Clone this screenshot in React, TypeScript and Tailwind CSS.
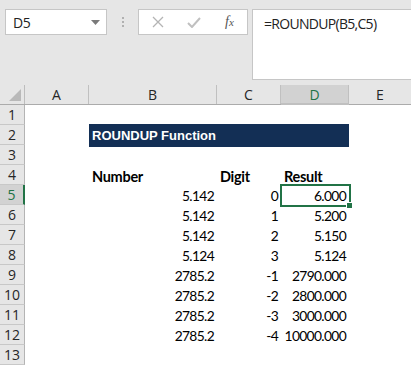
import React from 'react'

const cols = ['A', 'B', 'C', 'D', 'E']
const colW = ['w-[64px]', 'w-[128px]', 'w-[64px]', 'w-[68px]', 'w-[62px]']

const data: [string, string, string][] = [
  ['5.142', '0', '6.000'],
  ['5.142', '1', '5.200'],
  ['5.142', '2', '5.150'],
  ['5.124', '3', '5.124'],
  ['2785.2', '-1', '2790.000'],
  ['2785.2', '-2', '2800.000'],
  ['2785.2', '-3', '3000.000'],
  ['2785.2', '-4', '10000.000'],
]

const cellFont = "font-['Lato','Liberation_Sans',sans-serif] text-[14.5px] text-black"
const numCell = 'text-[13.8px] tracking-[-0.65px] pt-[3px]'
const uiFont = "font-['Open_Sans','Noto_Sans',sans-serif]"

function RowHead({ n, active = false }: { n: number; active?: boolean }) {
  return (
    <div
      className={`w-[25px] shrink-0 h-full flex items-center justify-center border-b border-[#c8c8c8] text-[14px] ${uiFont} ${
        active ? 'bg-[#d2d2d2] text-[#217346] border-r-2 border-r-[#217346]' : 'bg-[#e6e6e6] text-[#262626] border-r border-r-[#b4b4b4]'
      }`}
    >
      {n}
    </div>
  )
}

function Row({ n, children, active = false }: { n: number; children?: React.ReactNode; active?: boolean }) {
  return (
    <div className="flex h-[20px]">
      <RowHead n={n} active={active} />
      {children ?? <div className="flex-1" />}
    </div>
  )
}

export default function App() {
  return (
    <div className="w-[411px] h-[365px] overflow-hidden bg-white flex flex-col">
      {/* formula bar */}
      <div className="h-[85px] shrink-0 bg-[#e6e6e6] flex items-start pt-[9px] pl-[5px]">
        <div className={`w-[102px] h-[26px] bg-white border border-[#c6c6c6] flex items-center justify-between pl-[7px] pr-[6px] text-[14px] tracking-[-0.3px] text-[#222] ${uiFont}`}>
          <span>D5</span>
          <svg width="9" height="5" viewBox="0 0 9 5"><path d="M0 0h9L4.5 5z" fill="#7a7a7a" /></svg>
        </div>
        <div className="w-[31px] h-[26px] flex flex-col items-center justify-center gap-[2px]">
          <span className="w-[2px] h-[2px] bg-[#b0b0b0]" />
          <span className="w-[2px] h-[2px] bg-[#b0b0b0]" />
          <span className="w-[2px] h-[2px] bg-[#b0b0b0]" />
        </div>
        <div className="w-[110px] h-[26px] bg-white border border-[#c6c6c6] flex items-center">
          <svg className="ml-[13px]" width="12" height="12" viewBox="0 0 12 12">
            <path d="M1 1l10 10M11 1L1 11" stroke="#b4b4b4" strokeWidth="1.3" />
          </svg>
          <svg className="ml-[23px]" width="14" height="11" viewBox="0 0 14 11">
            <path d="M1 6l4 4 8-9" stroke="#c0c0c0" strokeWidth="2" fill="none" />
          </svg>
          <span className="ml-[24px] font-['Liberation_Serif',serif] italic text-[14px] text-[#555] leading-none">
            f<span className="text-[11px]">x</span>
          </span>
        </div>
        <div className={`ml-[4px] flex-1 h-[71px] bg-white border border-[#c6c6c6] border-r-0 pl-[11px] pt-[3px] text-[14px] tracking-[-0.7px] text-[#222] ${uiFont}`}>
          =ROUNDUP(B5,C5)
        </div>
      </div>

      {/* column headers */}
      <div className={`flex h-[20px] shrink-0 bg-[#e6e6e6] border-b border-[#ababab] text-[14px] ${uiFont}`}>
        <div className="w-[25px] shrink-0 border-r border-[#bdbdbd] flex items-end justify-end p-[3px]">
          <svg width="12" height="12" viewBox="0 0 12 12"><path d="M12 0v12H0z" fill="#b9b9b9" /></svg>
        </div>
        {cols.map((c, i) => (
          <div
            key={c}
            className={`${colW[i]} shrink-0 flex items-center justify-center ${
              c === 'D' ? 'bg-[#d2d2d2] text-[#217346] border-b-2 border-[#217346] -mb-px' : 'text-[#262626]'
            } ${c !== 'E' ? 'border-r border-[#c0c0c0]' : ''}`}
          >
            {c}
          </div>
        ))}
      </div>

      {/* sheet */}
      <div className={`flex flex-col ${cellFont}`}>
        <Row n={1} />
        <Row n={2}>
          <div className="w-[64px] shrink-0" />
          <div className="w-[260px] shrink-0 h-[23px] -mt-px bg-[#132f55] flex items-center pl-[3px] font-['Liberation_Sans',sans-serif] font-bold text-[13px] text-white">
            ROUNDUP Function
          </div>
        </Row>
        <Row n={3} />
        <Row n={4}>
          <div className="w-[64px] shrink-0" />
          <div className="w-[128px] shrink-0 pl-[3px] pt-[3px] font-bold flex items-center tracking-[-0.3px]">Number</div>
          <div className="w-[64px] shrink-0 pl-[3px] pt-[3px] font-bold flex items-center tracking-[-0.3px]">Digit</div>
          <div className="w-[68px] shrink-0 pl-[3px] pt-[3px] font-bold flex items-center tracking-[-0.3px]">Result</div>
        </Row>
        {data.map(([num, dig, res], i) => (
          <Row key={i} n={i + 5} active={i === 0}>
            <div className="w-[64px] shrink-0" />
            <div className={`w-[128px] shrink-0 flex items-center justify-end pr-[3px] ${numCell}`}>{num}</div>
            <div className={`w-[64px] shrink-0 flex items-center justify-end pr-[3px] ${numCell}`}>{dig}</div>
            <div className={`w-[68px] shrink-0 flex items-center justify-end pr-[3px] relative ${numCell}`}>
              {res}
              {i === 0 && (
                <>
                  <div className="absolute -left-px -top-px -right-[2px] -bottom-[2px] border-2 border-[#217346]" />
                  <div className="absolute -right-[4px] -bottom-[4px] w-[7px] h-[7px] bg-[#217346] border border-white" />
                </>
              )}
            </div>
          </Row>
        ))}
        <Row n={13} />
      </div>
    </div>
  )
}
